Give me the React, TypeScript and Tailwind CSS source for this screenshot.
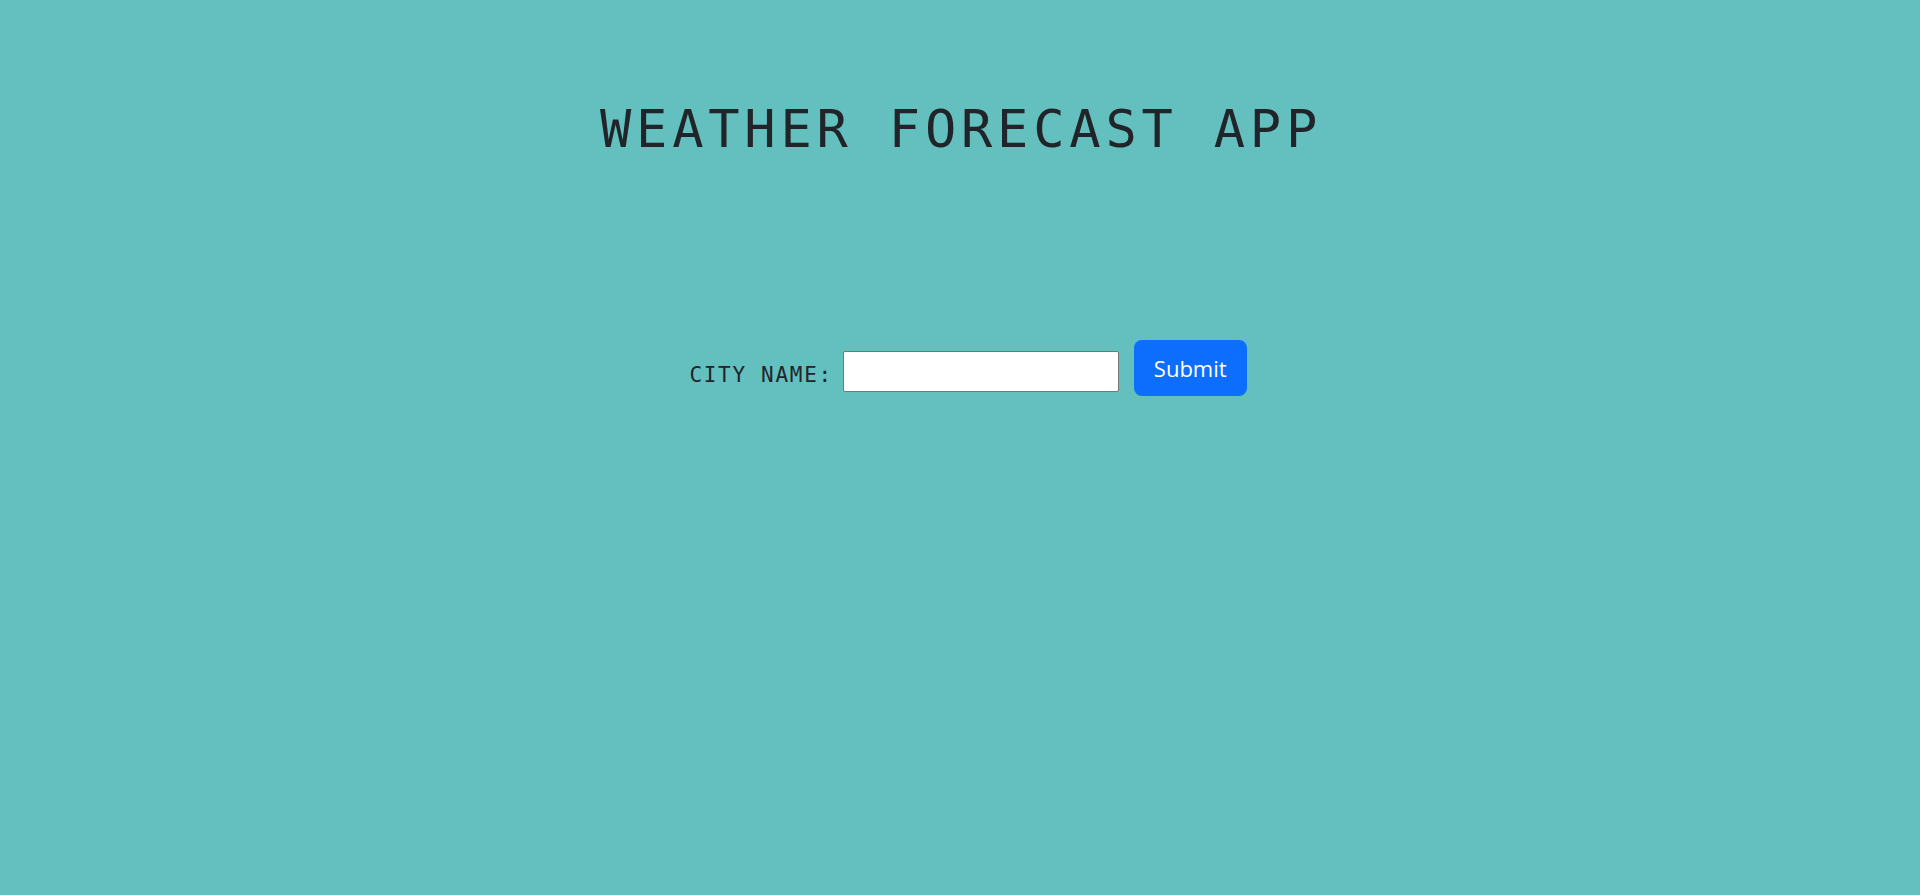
export default function App() {
  return (
    <div className="min-h-screen w-full bg-[#64bfbf] text-[#212529]">
      <h1 className="pt-[93px] pl-[2px] text-center font-['DejaVu_Sans_Mono',monospace] text-[52px] leading-[72px] tracking-[4.8px] font-normal">
        WEATHER FORECAST APP
      </h1>

      <form
        className="mt-[175px] flex items-start justify-center pl-[16px]"
        onSubmit={(e) => e.preventDefault()}
      >
        <label
          htmlFor="city"
          className="mt-[23px] font-['DejaVu_Sans_Mono',monospace] text-[21px] leading-[24px] tracking-[1.7px]"
        >
          CITY NAME:
        </label>
        <input
          id="city"
          type="text"
          className="ml-[10px] mt-[11px] h-[41px] w-[276px] rounded-[2px] border border-[#767676] bg-white px-2 text-base outline-none"
        />
        <button
          type="submit"
          className="ml-[15px] h-[56px] rounded-[8px] bg-[#0d6efd] px-5 font-['Open_Sans',sans-serif] text-[22px] text-white"
        >
          Submit
        </button>
      </form>
    </div>
  );
}
